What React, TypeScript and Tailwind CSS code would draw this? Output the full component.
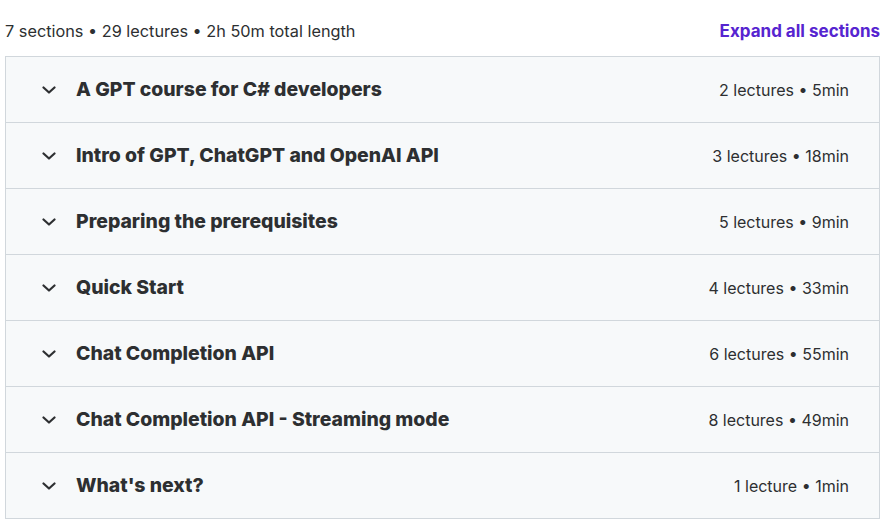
type Section = {
  title: string;
  lectures: number;
  length: string;
};

const sections: Section[] = [
  { title: "A GPT course for C# developers", lectures: 2, length: "5min" },
  { title: "Intro of GPT, ChatGPT and OpenAI API", lectures: 3, length: "18min" },
  { title: "Preparing the prerequisites", lectures: 5, length: "9min" },
  { title: "Quick Start", lectures: 4, length: "33min" },
  { title: "Chat Completion API", lectures: 6, length: "55min" },
  { title: "Chat Completion API - Streaming mode", lectures: 8, length: "49min" },
  { title: "What's next?", lectures: 1, length: "1min" },
];

function Chevron() {
  return (
    <svg width="14" height="8" viewBox="0 0 14 8" fill="none" className="shrink-0">
      <path d="M1.5 1.5 L7 6.5 L12.5 1.5" stroke="#2d2f31" strokeWidth="2.2" strokeLinecap="round" strokeLinejoin="round" />
    </svg>
  );
}

export default function App() {
  return (
    <div className="min-h-screen bg-white font-['Inter',sans-serif] text-[#2d2f31]">
      <div className="ml-[5px] w-[875px]">
        {/* Summary line */}
        <div className="flex h-[56px] items-center justify-between pt-[6px]">
          <span className="text-[16.3px]">7 sections • 29 lectures • 2h 50m total length</span>
          <button className="pt-[2px] text-[17px] font-bold text-[#5624d0]">Expand all sections</button>
        </div>

        {/* Sections */}
        <div className="border border-b-0 border-[#d1d7dc]">
          {sections.map((s) => (
            <div
              key={s.title}
              className="flex h-[66px] items-center border-b border-[#d1d7dc] bg-[#f7f9fa] pl-[36px] pr-[30px]"
            >
              <Chevron />
              <span className="ml-[20px] flex-1 pt-[1px] text-[19.4px] font-extrabold">{s.title}</span>
              <span className="text-[16px]">
                {s.lectures} {s.lectures === 1 ? "lecture" : "lectures"} • {s.length}
              </span>
            </div>
          ))}
        </div>
      </div>
    </div>
  );
}
